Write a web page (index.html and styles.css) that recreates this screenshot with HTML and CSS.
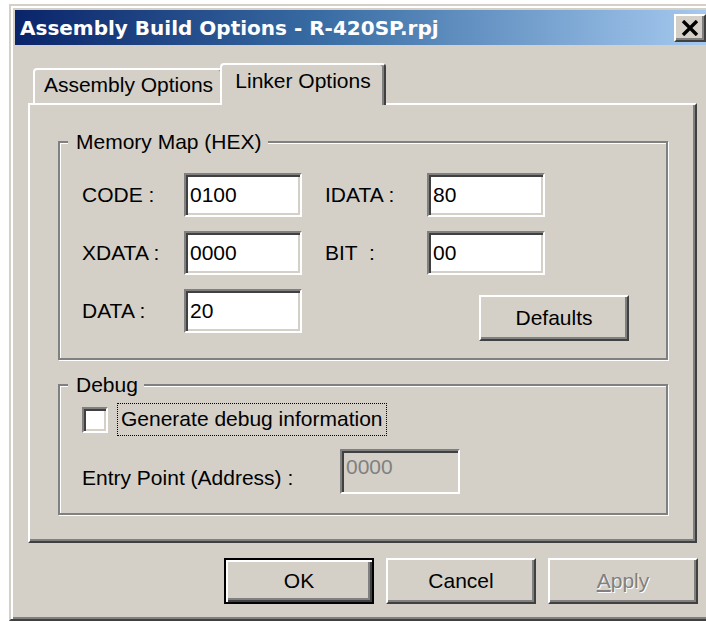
FILE: index.html
```html
<!DOCTYPE html>
<html lang="en">
<head>
<meta charset="utf-8">
<title>Assembly Build Options</title>
<link rel="stylesheet" href="styles.css">
</head>
<body>
<div class="window">
  <div class="titlebar">
    <span class="title">Assembly Build Options - R-420SP.rpj</span>
    <span class="close" aria-label="Close">
      <svg width="18" height="16" viewBox="0 0 18 16">
        <path d="M2 1 L16 15 M16 1 L2 15" stroke="#000" stroke-width="3.4" fill="none"/>
      </svg>
    </span>
  </div>

  <div class="tabs">
    <div class="tab">Assembly Options</div>
    <div class="tab active">Linker Options</div>
  </div>

  <div class="panel">
    <div class="group">
      <div class="legend">Memory Map (HEX)</div>
      <div class="mem-grid">
        <div class="lbl">CODE :</div>
        <div class="field">0100</div>
        <div class="lbl col4">IDATA :</div>
        <div class="field">80</div>

        <div class="lbl">XDATA :</div>
        <div class="field">0000</div>
        <div class="lbl col4">BIT &nbsp;:</div>
        <div class="field">00</div>

        <div class="lbl">DATA :</div>
        <div class="field">20</div>
        <button class="btn defaults">Defaults</button>
      </div>
    </div>

    <div class="group debug">
      <div class="legend">Debug</div>
      <div class="check-row">
        <span class="checkbox"></span>
        <span class="focus">Generate debug information</span>
      </div>
      <div class="entry-row">
        <div class="entry-lbl">Entry Point (Address) :</div>
        <div class="field disabled">0000</div>
      </div>
    </div>
  </div>

  <div class="buttons">
    <button class="btn default">OK</button>
    <button class="btn">Cancel</button>
    <button class="btn disabled-btn"><span><u>A</u>pply</span></button>
  </div>
</div>
</body>
</html>
```

FILE: styles.css
```css
html, body {
  margin: 0;
  height: 100%;
  overflow: hidden;
  background: #ffffff;
}

body {
  font-family: "Liberation Sans", Arial, sans-serif;
  font-size: 21px;
  line-height: 24px;
  color: #000;
}

/* dialog frame */
.window {
  margin: 4px 0 0 9px;
  width: 707px;
  height: 617px;
  box-sizing: border-box;
  background: #d4d0c8;
  border: 2px solid;
  border-color: #d4d0c8 #404040 #404040 #d4d0c8;
  box-shadow: inset 2px 2px #ffffff, inset -2px -2px #808080;
  padding: 4px;
  display: flex;
  flex-direction: column;
}

.titlebar {
  height: 35px;
  flex: none;
  display: flex;
  align-items: center;
  justify-content: space-between;
  padding: 0 4px 0 5px;
  background: linear-gradient(to right, #0a246a 0%, #3a6ea5 45%, #a6caf0 100%);
  color: #fff;
}

.title {
  font-family: "DejaVu Sans", Tahoma, sans-serif;
  font-weight: bold;
  font-size: 20px;
  white-space: nowrap;
}

.close {
  width: 32px;
  height: 28px;
  box-sizing: border-box;
  background: #d4d0c8;
  border: 2px solid;
  border-color: #ffffff #404040 #404040 #ffffff;
  box-shadow: inset -2px -2px #808080;
  display: flex;
  align-items: center;
  justify-content: center;
}

.close svg {
  display: block;
}

/* tab strip */
.tabs {
  display: flex;
  align-items: flex-end;
  height: 40px;
  margin: 18px 13px 0;
  padding-left: 5px;
  flex: none;
}

.tab {
  width: 191px;
  height: 35px;
  box-sizing: border-box;
  border: 2px solid;
  border-bottom: none;
  border-color: #ffffff #404040 transparent #ffffff;
  box-shadow: inset -2px 0 #808080;
  border-radius: 4px 4px 0 0;
  background: #d4d0c8;
  text-align: center;
  padding-top: 3px;
  white-space: nowrap;
}

.tab.active {
  width: 166px;
  height: 42px;
  margin-left: -4px;
  margin-bottom: -2px;
  padding-top: 4px;
  position: relative;
  z-index: 1;
}

.panel {
  height: 440px;
  margin: 0 13px;
  box-sizing: border-box;
  border: 2px solid;
  border-color: #ffffff #404040 #404040 #ffffff;
  box-shadow: inset -2px -2px #808080;
  padding: 36px 27px 0 28px;
  flex: none;
}

/* etched group boxes */
.group {
  border: 2px solid #808080;
  box-shadow: inset 1px 1px #ffffff, 1px 1px #ffffff;
}

.group.debug {
  margin-top: 24px;
}

.legend {
  width: fit-content;
  margin: -13px 0 0 8px;
  padding: 0 6px 0 8px;
  background: #d4d0c8;
  white-space: nowrap;
}

.mem-grid {
  display: grid;
  grid-template-columns: 102px 118px 23px 102px 118px 1fr;
  row-gap: 14px;
  align-items: start;
  margin: 19px 37px 17px 22px;
}

.lbl {
  height: 44px;
  display: flex;
  align-items: center;
  grid-column: 1;
  white-space: pre;
}

.lbl.col4 {
  grid-column: 4;
}

.field {
  height: 44px;
  box-sizing: border-box;
  background: #fff;
  border: 2px solid;
  border-color: #808080 #ffffff #ffffff #808080;
  box-shadow: inset 2px 2px #404040, inset -2px -2px #d4d0c8;
  padding-left: 4px;
  display: flex;
  align-items: center;
}

.field.disabled {
  width: 120px;
  height: 45px;
  background: #d4d0c8;
  color: #808080;
  align-items: flex-start;
  padding-top: 4px;
}

/* push buttons */
.btn {
  width: 150px;
  height: 46px;
  box-sizing: border-box;
  padding: 0;
  margin: 0;
  background: #d4d0c8;
  border: 2px solid;
  border-color: #ffffff #404040 #404040 #ffffff;
  box-shadow: inset -2px -2px #808080;
  font: inherit;
  color: #000;
  display: flex;
  align-items: center;
  justify-content: center;
}

.btn.defaults {
  grid-column: 4 / -1;
  justify-self: end;
  margin-top: 6px;
}

.btn.default {
  border-color: #000;
  box-shadow: inset 2px 2px #ffffff, inset -2px -2px #404040, inset -4px -4px #808080;
}

.disabled-btn {
  color: #808080;
  text-shadow: 1px 1px #ffffff;
}

/* debug group rows */
.check-row {
  display: flex;
  align-items: center;
  height: 33px;
  margin: 6px 0 0 22px;
}

.checkbox {
  width: 26px;
  height: 26px;
  box-sizing: border-box;
  background: #fff;
  border: 2px solid;
  border-color: #808080 #ffffff #ffffff #808080;
  box-shadow: inset 2px 2px #404040, inset -2px -2px #d4d0c8;
}

.focus {
  margin-left: 9px;
  height: 33px;
  box-sizing: border-box;
  border: 1px dotted #000;
  padding: 3px 3px 0;
  white-space: nowrap;
}

.entry-row {
  display: flex;
  align-items: flex-start;
  margin: 13px 0 19px 22px;
}

.entry-lbl {
  width: 258px;
  padding-top: 17px;
  white-space: nowrap;
}

.buttons {
  display: flex;
  justify-content: flex-end;
  gap: 12px;
  margin: 15px 12px 0 0;
  flex: none;
}
```
